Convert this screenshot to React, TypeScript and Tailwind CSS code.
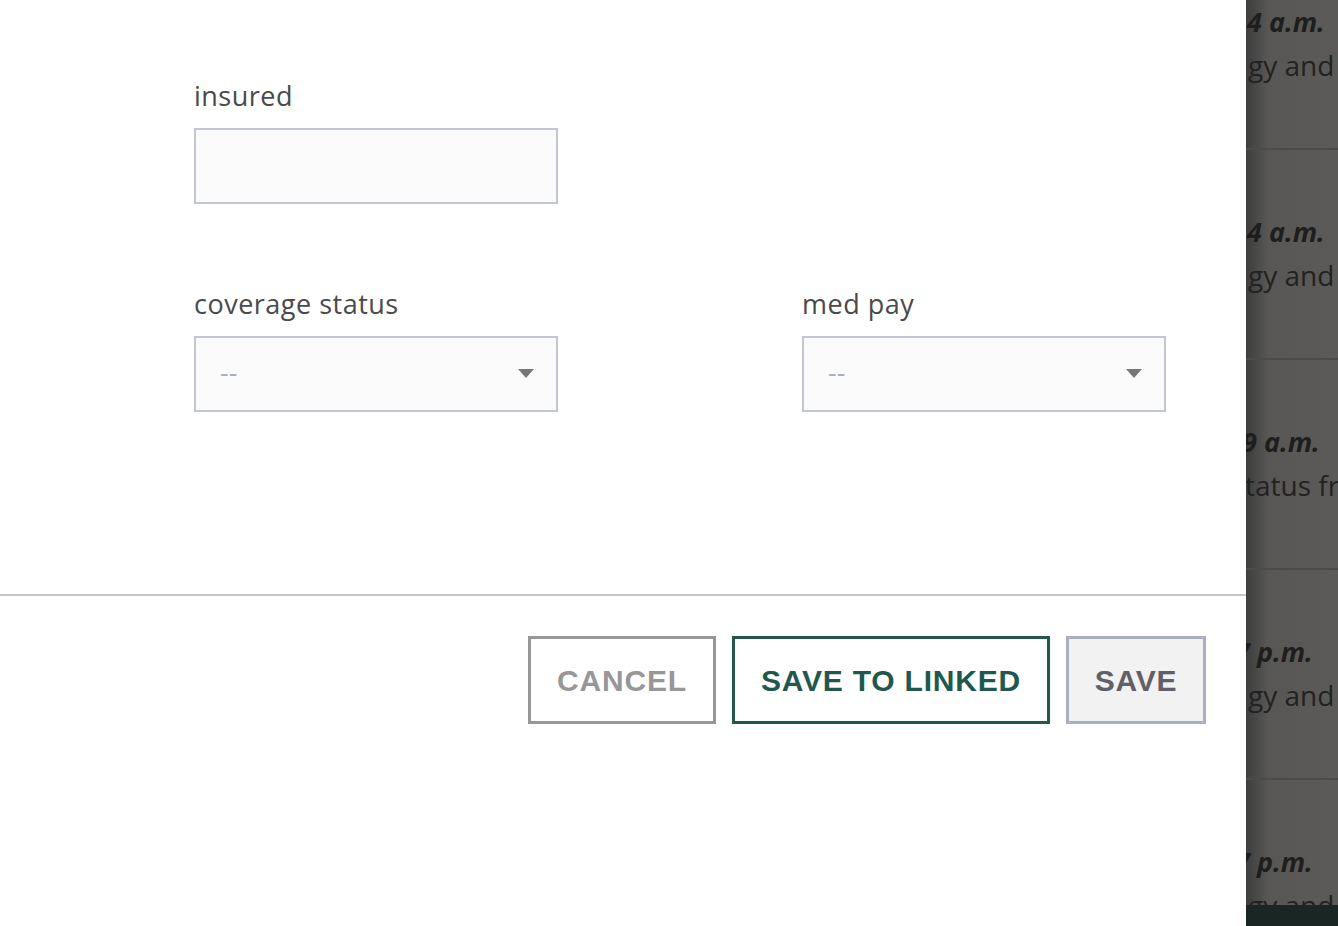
const labelFont = { fontFamily: '"Open Sans", Lato, sans-serif' }

function Field({ label, children }: { label: string; children: React.ReactNode }) {
  return (
    <div className="flex flex-col">
      <label className="text-[27px] leading-[32px] tracking-[0.5px] text-[#4a4a4a] mb-4" style={labelFont}>
        {label}
      </label>
      {children}
    </div>
  )
}

function Select() {
  return (
    <div className="h-[76px] border-2 border-[#c2c5d2] bg-[#fcfbfc] flex items-center justify-between pl-[24px] pr-[22px]">
      <span
        className="text-[#a9aec0] text-[26px] leading-none -mt-[2px]"
        style={{ fontFamily: '"Liberation Sans", Arial, sans-serif' }}
      >
        --
      </span>
      <svg width="16" height="10" viewBox="0 0 16 10">
        <path d="M0 0 L16 0 L8 9 Z" fill="#777777" />
      </svg>
    </div>
  )
}

const rows = [
  { time: '4 a.m.', text: 'gy and', shift: 'ml-[1px]', tshift: 'ml-[2px]' },
  { time: '4 a.m.', text: 'gy and', shift: 'ml-[1px]', tshift: 'ml-[2px]' },
  { time: '9 a.m.', text: 'tatus from', shift: '-ml-[4px]', tshift: '-ml-[1px]' },
  { time: '7 p.m.', text: 'gy and', shift: '-ml-[11px]', tshift: 'ml-[2px]' },
  { time: '7 p.m.', text: 'gy and', shift: '-ml-[11px]', tshift: 'ml-[2px]' },
]

export default function App() {
  return (
    <div className="w-[1338px] h-[926px] flex overflow-hidden bg-white">
      <div className="w-[1246px] shrink-0 bg-white flex flex-col">
        <div className="pt-[80px] pl-[194px]">
          <div className="w-[364px]">
            <Field label="insured">
              <div className="h-[76px] border-2 border-[#c2c5d2] bg-[#fcfbfc]" />
            </Field>
          </div>
          <div className="mt-[84px] grid grid-cols-[364px_364px] gap-x-[244px]">
            <Field label="coverage status">
              <Select />
            </Field>
            <Field label="med pay">
              <Select />
            </Field>
          </div>
        </div>
        <div className="mt-[182px] h-[2px] bg-[#c6c6c6]" />
        <div
          className="mt-[40px] flex justify-end gap-[16px] pr-[40px]"
          style={{ fontFamily: '"Liberation Sans", Arial, sans-serif' }}
        >
          <button className="w-[188px] h-[88px] border-[3px] border-[#979797] bg-white text-[#979797] text-[30px] font-bold tracking-[0.8px]">
            CANCEL
          </button>
          <button className="w-[318px] h-[88px] border-[3px] border-[#22574e] bg-white text-[#22574e] text-[30px] font-bold tracking-[0.8px]">
            SAVE TO LINKED
          </button>
          <button className="w-[140px] h-[88px] border-[3px] border-[#aab0c2] bg-[#f2f2f2] text-[#606168] text-[30px] font-bold tracking-[0.8px]">
            SAVE
          </button>
        </div>
      </div>
      <div
        className="flex-1 flex flex-col overflow-hidden bg-[linear-gradient(to_right,#3d3d3d,#585756_22px,#5b5a58)]"
        style={labelFont}
      >
        <div className="flex-1 overflow-hidden">
          {rows.map((r, i) => (
            <div
              key={i}
              className={`${i === 0 ? 'h-[150px] pt-[8px]' : 'h-[210px] pt-[68px]'} border-b-2 border-[#4b4b4a] whitespace-nowrap`}
            >
              <div className={`${r.shift} text-[27px] leading-[28px] font-bold italic text-[#1e1e1e]`}>{r.time}</div>
              <div className={`${r.tshift} mt-[14px] text-[28px] leading-[30px] text-[#222222]`}>{r.text}</div>
            </div>
          ))}
        </div>
        <div className="h-[21px] shrink-0 bg-[#1a2624]" />
      </div>
    </div>
  )
}
